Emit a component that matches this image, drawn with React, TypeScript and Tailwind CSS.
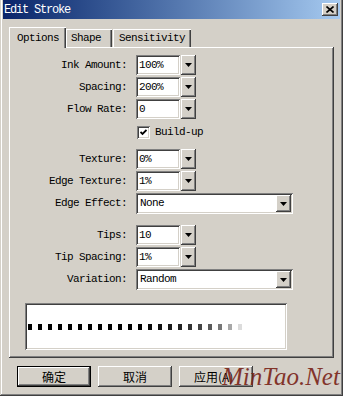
import React from "react";

const raised =
  "shadow-[inset_-1px_-1px_#404040,inset_1px_1px_#ffffff,inset_-2px_-2px_#808080,inset_2px_2px_#d4d0c8]";
const sunken =
  "shadow-[inset_1px_1px_#808080,inset_-1px_-1px_#ffffff,inset_2px_2px_#404040,inset_-2px_-2px_#d4d0c8]";
const mono = "font-['Liberation_Mono','Noto_Sans_CJK_SC',monospace] text-[11px] tracking-[-0.6px]";

const Arrow = () => (
  <svg width="7" height="4" viewBox="0 0 7 4">
    <path d="M0 0h7L3.5 4z" fill="#000" />
  </svg>
);

const DropButton = ({ h = 20 }: { h?: number }) => (
  <div
    className={`w-[15px] flex items-center justify-center bg-[#d4d0c8] ${raised}`}
    style={{ height: h }}
  >
    <Arrow />
  </div>
);

const Label = ({ text }: { text: string }) => (
  <div className={`w-[118px] pr-[1px] text-right ${mono} text-black`}>{text}</div>
);

const Field = ({ label, value }: { label: string; value: string }) => (
  <div className="flex items-center h-[20px]">
    <Label text={label} />
    <div className="ml-[8px] flex gap-[1px]">
      <div className={`w-[44px] h-[20px] bg-white flex items-center pl-[3px] ${sunken} ${mono}`}>
        {value}
      </div>
      <DropButton />
    </div>
  </div>
);

const Combo = ({ label, value }: { label: string; value: string }) => (
  <div className="flex items-center h-[21px]">
    <Label text={label} />
    <div
      className={`ml-[8px] w-[157px] h-[21px] bg-white flex items-center justify-between pl-[4px] pr-[2px] ${sunken} ${mono}`}
    >
      <span>{value}</span>
      <DropButton h={17} />
    </div>
  </div>
);

const dots = [
  "#000", "#000", "#000", "#000", "#000", "#000", "#000", "#000", "#000", "#000", "#000",
  "#000", "#0a0a0a", "#111", "#1a1a1a", "#222", "#333", "#444", "#5a5a5a", "#777", "#a8a8a8", "#dcdcdc",
];

const tabShadow = "shadow-[inset_1px_1px_#ffffff,inset_-1px_0_#404040,inset_-2px_0_#808080]";

export default function App() {
  return (
    <div className="relative w-[343px] h-[396px] bg-[#d4d0c8] px-[3px] pb-[3px] shadow-[inset_-1px_-1px_#404040,inset_1px_0_#d4d0c8,inset_-2px_-2px_#808080,inset_2px_0_#ffffff] overflow-hidden select-none">
      {/* title bar */}
      <div className="h-[19px] flex items-center justify-between bg-gradient-to-r from-[#0a246a] to-[#a6caf0] pl-[1px] pr-[2px]">
        <span className={`text-white ${mono} text-[12px] tracking-[-1.2px]`}>Edit Stroke</span>
        <div className={`w-[16px] h-[13px] bg-[#d4d0c8] flex items-center justify-center ${raised}`}>
          <svg width="8" height="7" viewBox="0 0 8 7">
            <path d="M0.5 0.5L7.5 6.5M7.5 0.5L0.5 6.5" stroke="#000" strokeWidth="1.6" />
          </svg>
        </div>
      </div>

      {/* tabs */}
      <div className="mt-[8px] ml-[6px] flex items-end h-[20px]">
        <div
          className={`relative z-10 h-[21px] w-[57px] -mb-[1px] bg-[#d4d0c8] flex items-center pl-[8px] pt-[1px] ${mono} ${tabShadow}`}
        >
          Options
        </div>
        <div className={`h-[18px] w-[46px] flex items-center pl-[5px] ${mono} ${tabShadow}`}>Shape</div>
        <div className={`h-[18px] w-[78px] ml-[1px] flex items-center pl-[6px] ${mono} ${tabShadow}`}>
          Sensitivity
        </div>
      </div>

      {/* panel */}
      <div className="ml-[6px] w-[325px] h-[311px] pt-[8px] pl-[1px] shadow-[inset_-1px_-1px_#404040,inset_1px_1px_#ffffff,inset_-2px_-2px_#808080]">
        <div className="flex flex-col gap-[2px]">
          <Field label="Ink Amount:" value="100%" />
          <Field label="Spacing:" value="200%" />
          <Field label="Flow Rate:" value="0" />
        </div>

        <div className="flex items-center h-[13px] mt-[7px] ml-[127px]">
          <div className={`w-[13px] h-[13px] bg-white flex items-center justify-center ${sunken}`}>
            <svg width="7" height="7" viewBox="0 0 7 7">
              <path d="M0.5 3L2.5 5L6.5 1" stroke="#000" strokeWidth="1.8" fill="none" />
            </svg>
          </div>
          <span className={`ml-[5px] ${mono}`}>Build-up</span>
        </div>

        <div className="flex flex-col gap-[2px] mt-[10px]">
          <Field label="Texture:" value="0%" />
          <Field label="Edge Texture:" value="1%" />
          <Combo label="Edge Effect:" value="None" />
        </div>

        <div className="flex flex-col gap-[2px] mt-[11px]">
          <Field label="Tips:" value="10" />
          <Field label="Tip Spacing:" value="1%" />
          <Combo label="Variation:" value="Random" />
        </div>

        <div className={`mt-[13px] ml-[15px] w-[262px] h-[47px] bg-white flex items-center pl-[3px] ${sunken}`}>
          <div className="flex gap-[6px]">
            {dots.map((c, i) => (
              <div key={i} className="w-[4px] h-[6px]" style={{ background: c }} />
            ))}
          </div>
        </div>
      </div>

      {/* buttons */}
      <div className="mt-[8px] ml-[14px] flex gap-[7px]">
        <div className="w-[74px] h-[21px] bg-[#d4d0c8] flex items-center justify-center text-[12px] font-['Noto_Sans_CJK_SC',sans-serif] shadow-[inset_0_0_0_1px_#000000,inset_-2px_-2px_#404040,inset_2px_2px_#ffffff,inset_-3px_-3px_#808080]">
          确定
        </div>
        <div className={`w-[74px] h-[21px] bg-[#d4d0c8] flex items-center justify-center text-[12px] font-['Noto_Sans_CJK_SC',sans-serif] ${raised}`}>
          取消
        </div>
        <div className={`w-[74px] h-[21px] bg-[#d4d0c8] flex items-center justify-start pl-[15px] text-[12px] font-['Noto_Sans_CJK_SC',sans-serif] ${raised}`}>
          应用(A)
        </div>
      </div>

      {/* watermark */}
      <div className="absolute left-[222px] top-[364px] text-[25px] leading-none italic font-['Liberation_Serif',serif] text-[#7a2418] opacity-90">
        MinTao.Net
      </div>
    </div>
  );
}
